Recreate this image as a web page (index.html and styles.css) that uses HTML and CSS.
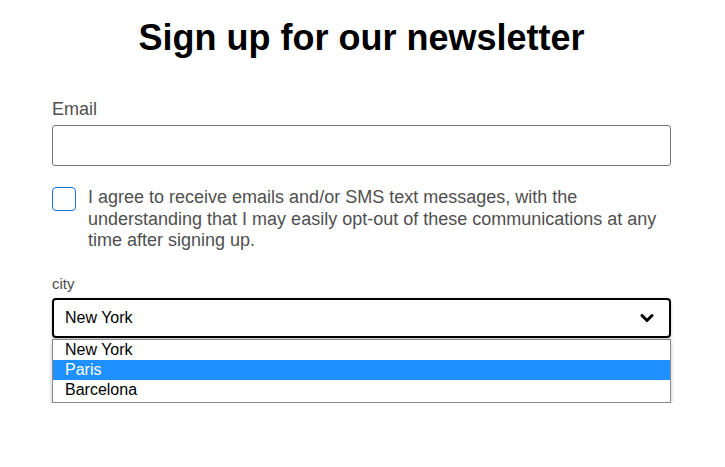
FILE: index.html
```html
<!DOCTYPE html>
<html>
<head>
<meta charset="utf-8">
<link rel="stylesheet" href="styles.css">
</head>
<body>
<div class="page">
  <h1 class="title">Sign up for our newsletter</h1>
  <div class="field">
    <div class="label">Email</div>
    <div class="input"></div>
  </div>
  <div class="consent">
    <span class="checkbox"></span>
    <span class="consent-text">I agree to receive emails and/or SMS text messages, with the understanding that I may easily opt-out of these communications at any time after signing up.</span>
  </div>
  <div class="field city">
    <div class="label small">city</div>
    <div class="select">
      <span>New York</span>
      <svg class="chev" width="14" height="10" viewBox="0 0 14 10"><polyline points="2,2.5 7,7.5 12,2.5" fill="none" stroke="#000" stroke-width="3" stroke-linecap="round" stroke-linejoin="round"/></svg>
    </div>
    <div class="menu">
      <div class="menu-item">New York</div>
      <div class="menu-item current">Paris</div>
      <div class="menu-item">Barcelona</div>
    </div>
  </div>
</div>
</body>
</html>
```
FILE: styles.css
```css
html, body {
  margin: 0;
  padding: 0;
  background: #fff;
  font-family: "Liberation Sans", Arial, sans-serif;
}
.page {
  width: 619px;
  margin-left: 52px;
  padding-top: 17px;
}
.title {
  margin: 0;
  text-align: center;
  font-size: 36px;
  font-weight: bold;
  line-height: 42px;
  color: #000;
}
.field {
  margin-top: 40px;
}
.label {
  display: block;
  font-size: 18px;
  line-height: 21px;
  color: #4f4f4f;
  margin-bottom: 5px;
}
.input {
  height: 39px;
  border: 1px solid #767676;
  border-radius: 3px;
}
.consent {
  display: flex;
  align-items: flex-start;
  margin-top: 20px;
}
.checkbox {
  flex: none;
  width: 22px;
  height: 22px;
  border: 1.5px solid #1a73e8;
  border-radius: 4px;
  margin-top: 1px;
}
.consent-text {
  margin-left: 12px;
  font-size: 18px;
  line-height: 21.5px;
  color: #4f4f4f;
  margin-top: 1px;
}
.field.city {
  margin-top: 23px;
}
.label.small {
  font-size: 15px;
  line-height: 18px;
  margin-bottom: 5px;
}
.select {
  height: 36px;
  border: 2px solid #000;
  border-radius: 4px;
  display: flex;
  align-items: center;
  justify-content: space-between;
  padding: 0 15px 0 11px;
  font-size: 16px;
  color: #000;
  box-shadow: 0 1px 3px rgba(0,0,0,0.25);
}
.chev {
  display: block;
}
.menu {
  margin-top: 1px;
  padding-bottom: 2px;
  border: 1px solid #8a8a8a;
  background: #fff;
  box-shadow: 0 2px 4px rgba(0,0,0,0.25);
}
.menu-item {
  height: 20px;
  line-height: 19px;
  font-size: 16px;
  padding-left: 12px;
  color: #000;
}
.menu-item.current {
  background: #1e90ff;
  color: #fff;
}
```
